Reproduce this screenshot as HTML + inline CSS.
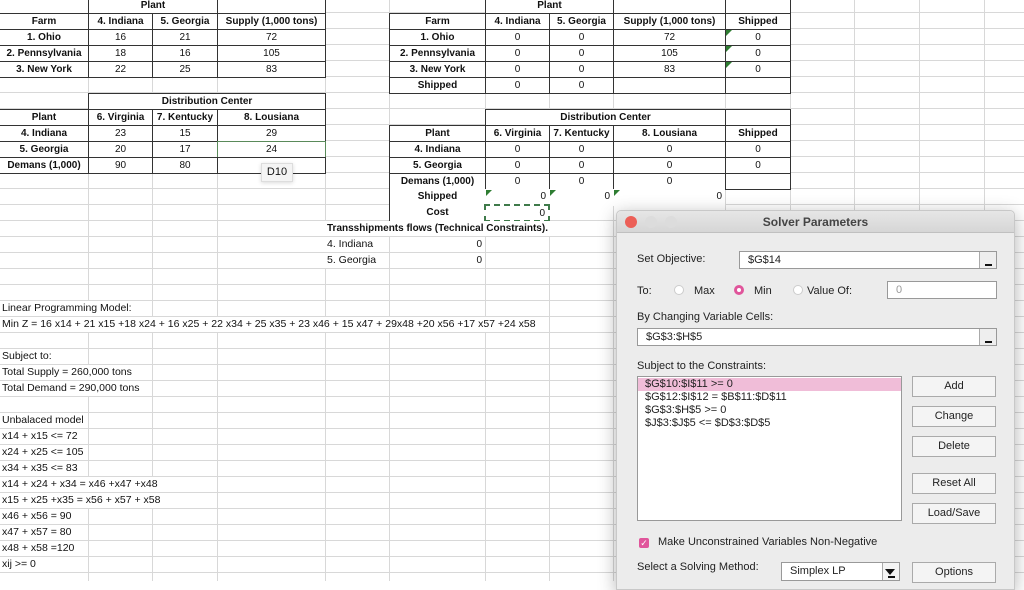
<!DOCTYPE html>
<html><head><meta charset="utf-8"><style>
*{margin:0;padding:0;box-sizing:border-box}
body{width:1024px;height:581px;overflow:hidden;background:#fff;position:relative;font-family:"Liberation Sans",sans-serif;font-size:10px;color:#111}
.g{position:absolute;inset:0;background-image:repeating-linear-gradient(to bottom,transparent 0,transparent 12px,#d8d8d8 12px,#d8d8d8 13px,transparent 13px,transparent 16px)}
.v{position:absolute;top:0;height:581px;width:1px;background:#d8d8d8}
.c{position:absolute;height:17px;line-height:16px;text-align:center;white-space:nowrap;font-size:10px;background:#fff}
.b{font-weight:bold}
.bd{border:1px solid #333}
.l{text-align:left;padding-left:2px;padding-right:2px;height:15px;line-height:15px;font-size:10.5px;background:#fff}
.r{text-align:right;padding-right:3px}
.tri{position:absolute;width:0;height:0;border-top:6px solid #2e7d32;border-right:6px solid transparent}
.dlg{position:absolute;left:616px;top:210px;width:399px;height:380px;background:#ececec;border:1px solid #c8c8c8;border-radius:5px 5px 0 0;box-shadow:0 4px 18px rgba(0,0,0,.3);font-size:11px;color:#222}
.dlg .t{position:absolute;white-space:nowrap}
.in{position:absolute;background:#fff;border:1px solid #999;height:18px;line-height:16px;padding-left:8px;font-size:11px}
.dd{position:absolute;right:0;top:0;width:17px;height:16px;border-left:1px solid #aaa;background:#eee}
.dd:after{content:"";position:absolute;left:5px;bottom:2px;width:7px;height:2px;background:#111}
.btn{position:absolute;left:295px;width:84px;height:21px;border:1px solid #aaa;background:#f4f4f4;text-align:center;line-height:19px;font-size:11px}
.rad{position:absolute;width:10px;height:10px;border-radius:50%;background:#fff;border:1px solid #ccc}
</style></head><body>
<div class="g" style="top:0"></div>
<div class="v" style="left:88px"></div><div class="v" style="left:152px"></div><div class="v" style="left:217px"></div><div class="v" style="left:325px"></div><div class="v" style="left:389px"></div><div class="v" style="left:485px"></div><div class="v" style="left:549px"></div><div class="v" style="left:613px"></div><div class="v" style="left:725px"></div><div class="v" style="left:790px"></div><div class="v" style="left:854px"></div><div class="v" style="left:919px"></div><div class="v" style="left:984px"></div>

<!-- left table 1 -->
<div class="c b" style="left:0;top:-3px;width:89px;border-bottom:1px solid #333"></div>
<div class="c b bd" style="left:88px;top:-3px;width:130px">Plant</div>
<div class="c bd" style="left:217px;top:-3px;width:109px"></div>
<div class="c b bd" style="left:-1px;top:13px;width:90px">Farm</div><div class="c b bd" style="left:88px;top:13px;width:65px">4. Indiana</div><div class="c b bd" style="left:152px;top:13px;width:66px">5. Georgia</div><div class="c b bd" style="left:217px;top:13px;width:109px">Supply (1,000 tons)</div>
<div class="c b bd" style="left:-1px;top:29px;width:90px">1. Ohio</div><div class="c bd" style="left:88px;top:29px;width:65px">16</div><div class="c bd" style="left:152px;top:29px;width:66px">21</div><div class="c bd" style="left:217px;top:29px;width:109px">72</div>
<div class="c b bd" style="left:-1px;top:45px;width:90px">2. Pennsylvania</div><div class="c bd" style="left:88px;top:45px;width:65px">18</div><div class="c bd" style="left:152px;top:45px;width:66px">16</div><div class="c bd" style="left:217px;top:45px;width:109px">105</div>
<div class="c b bd" style="left:-1px;top:61px;width:90px">3. New York</div><div class="c bd" style="left:88px;top:61px;width:65px">22</div><div class="c bd" style="left:152px;top:61px;width:66px">25</div><div class="c bd" style="left:217px;top:61px;width:109px">83</div>

<!-- left table 2 -->
<div class="c b bd" style="left:88px;top:93px;width:238px">Distribution Center</div>
<div class="c b bd" style="left:-1px;top:109px;width:90px">Plant</div><div class="c b bd" style="left:88px;top:109px;width:65px">6. Virginia</div><div class="c b bd" style="left:152px;top:109px;width:66px">7. Kentucky</div><div class="c b bd" style="left:217px;top:109px;width:109px">8. Lousiana</div>
<div class="c b bd" style="left:-1px;top:125px;width:90px">4. Indiana</div><div class="c bd" style="left:88px;top:125px;width:65px">23</div><div class="c bd" style="left:152px;top:125px;width:66px">15</div><div class="c bd" style="left:217px;top:125px;width:109px">29</div>
<div class="c b bd" style="left:-1px;top:141px;width:90px">5. Georgia</div><div class="c bd" style="left:88px;top:141px;width:65px">20</div><div class="c bd" style="left:152px;top:141px;width:66px">17</div><div class="c" style="left:217px;top:141px;width:109px;border:1px solid #5a8a5a">24</div>
<div class="c b bd" style="left:-1px;top:157px;width:90px">Demans (1,000)</div><div class="c bd" style="left:88px;top:157px;width:65px">90</div><div class="c bd" style="left:152px;top:157px;width:66px">80</div><div class="c bd" style="left:217px;top:157px;width:109px"></div>
<div style="position:absolute;left:261px;top:163px;width:32px;height:19px;background:#f4f4f4;border:1px solid #ddd;font-size:11px;line-height:17px;text-align:center;box-shadow:0 1px 4px rgba(0,0,0,.15)">D10</div>

<!-- right table 1 -->
<div class="c b bd" style="left:485px;top:-3px;width:129px">Plant</div><div class="c bd" style="left:613px;top:-3px;width:113px"></div><div class="c bd" style="left:725px;top:-3px;width:66px"></div>
<div class="c b bd" style="left:389px;top:13px;width:97px">Farm</div><div class="c b bd" style="left:485px;top:13px;width:65px">4. Indiana</div><div class="c b bd" style="left:549px;top:13px;width:65px">5. Georgia</div><div class="c b bd" style="left:613px;top:13px;width:113px">Supply (1,000 tons)</div><div class="c b bd" style="left:725px;top:13px;width:66px">Shipped</div>
<div class="c b bd" style="left:389px;top:29px;width:97px">1. Ohio</div><div class="c bd" style="left:485px;top:29px;width:65px">0</div><div class="c bd" style="left:549px;top:29px;width:65px">0</div><div class="c bd" style="left:613px;top:29px;width:113px">72</div><div class="c bd" style="left:725px;top:29px;width:66px">0</div>
<div class="c b bd" style="left:389px;top:45px;width:97px">2. Pennsylvania</div><div class="c bd" style="left:485px;top:45px;width:65px">0</div><div class="c bd" style="left:549px;top:45px;width:65px">0</div><div class="c bd" style="left:613px;top:45px;width:113px">105</div><div class="c bd" style="left:725px;top:45px;width:66px">0</div>
<div class="c b bd" style="left:389px;top:61px;width:97px">3. New York</div><div class="c bd" style="left:485px;top:61px;width:65px">0</div><div class="c bd" style="left:549px;top:61px;width:65px">0</div><div class="c bd" style="left:613px;top:61px;width:113px">83</div><div class="c bd" style="left:725px;top:61px;width:66px">0</div>
<div class="c b bd" style="left:389px;top:77px;width:97px">Shipped</div><div class="c bd" style="left:485px;top:77px;width:65px">0</div><div class="c bd" style="left:549px;top:77px;width:65px">0</div><div class="c bd" style="left:613px;top:77px;width:113px"></div><div class="c bd" style="left:725px;top:77px;width:66px"></div>
<div class="tri" style="left:726px;top:30px"></div><div class="tri" style="left:726px;top:46px"></div><div class="tri" style="left:726px;top:62px"></div>

<!-- right table 2 -->
<div class="c b bd" style="left:485px;top:109px;width:241px">Distribution Center</div><div class="c bd" style="left:725px;top:109px;width:66px"></div>
<div class="c b bd" style="left:389px;top:125px;width:97px">Plant</div><div class="c b bd" style="left:485px;top:125px;width:65px">6. Virginia</div><div class="c b bd" style="left:549px;top:125px;width:65px">7. Kentucky</div><div class="c b bd" style="left:613px;top:125px;width:113px">8. Lousiana</div><div class="c b bd" style="left:725px;top:125px;width:66px">Shipped</div>
<div class="c b bd" style="left:389px;top:141px;width:97px">4. Indiana</div><div class="c bd" style="left:485px;top:141px;width:65px">0</div><div class="c bd" style="left:549px;top:141px;width:65px">0</div><div class="c bd" style="left:613px;top:141px;width:113px">0</div><div class="c bd" style="left:725px;top:141px;width:66px">0</div>
<div class="c b bd" style="left:389px;top:157px;width:97px">5. Georgia</div><div class="c bd" style="left:485px;top:157px;width:65px">0</div><div class="c bd" style="left:549px;top:157px;width:65px">0</div><div class="c bd" style="left:613px;top:157px;width:113px">0</div><div class="c bd" style="left:725px;top:157px;width:66px">0</div>
<div class="c b bd" style="left:389px;top:173px;width:97px">Demans (1,000)</div><div class="c bd" style="left:485px;top:173px;width:65px">0</div><div class="c bd" style="left:549px;top:173px;width:65px">0</div><div class="c bd" style="left:613px;top:173px;width:113px">0</div><div class="c bd" style="left:725px;top:173px;width:66px"></div>
<div class="c b" style="left:389px;top:189px;width:96px;border-left:1px solid #333">Shipped</div>
<div class="c r" style="left:485px;top:189px;width:64px">0</div><div class="c r" style="left:549px;top:189px;width:64px">0</div><div class="c r" style="left:613px;top:189px;width:112px">0</div>
<div class="tri" style="left:486px;top:190px"></div><div class="tri" style="left:550px;top:190px"></div><div class="tri" style="left:614px;top:190px"></div>
<div class="c b" style="left:389px;top:205px;width:96px;border-left:1px solid #333">Cost</div>
<div class="c r" style="left:484px;top:204px;width:66px;height:18px;border:2px dashed #3f7a4a">0</div>
<div class="c b l" style="left:325px;top:221px;font-size:10px">Transshipments flows (Technical Constraints).</div>
<div class="c l" style="left:325px;top:237px">4. Indiana</div><div class="c r" style="left:389px;top:237px;width:96px;height:15px;background:none">0</div>
<div class="c l" style="left:325px;top:253px">5. Georgia</div><div class="c r" style="left:389px;top:253px;width:96px;height:15px;background:none">0</div>

<!-- left text -->
<div class="c l" style="left:0;top:301px">Linear Programming Model:</div>
<div class="c l" style="left:0;top:317px">Min Z = 16 x14 + 21 x15 +18 x24 + 16 x25 + 22 x34 + 25 x35 + 23 x46 + 15 x47 + 29x48 +20 x56 +17 x57 +24 x58</div>
<div class="c l" style="left:0;top:349px">Subject to:</div>
<div class="c l" style="left:0;top:365px">Total Supply = 260,000 tons</div>
<div class="c l" style="left:0;top:381px">Total Demand = 290,000 tons</div>
<div class="c l" style="left:0;top:413px">Unbalaced model</div>
<div class="c l" style="left:0;top:429px">x14 + x15 &lt;= 72</div>
<div class="c l" style="left:0;top:445px">x24 + x25 &lt;= 105</div>
<div class="c l" style="left:0;top:461px">x34 + x35 &lt;= 83</div>
<div class="c l" style="left:0;top:477px">x14 + x24 + x34 = x46 +x47 +x48</div>
<div class="c l" style="left:0;top:493px">x15 + x25 +x35 = x56 + x57 + x58</div>
<div class="c l" style="left:0;top:509px">x46 + x56 = 90</div>
<div class="c l" style="left:0;top:525px">x47 + x57 = 80</div>
<div class="c l" style="left:0;top:541px">x48 + x58 =120</div>
<div class="c l" style="left:0;top:557px">xij &gt;= 0</div>

<!-- dialog -->
<div class="dlg">
 <div style="position:absolute;left:0;top:0;right:0;height:22px;background:linear-gradient(#e6e6e6,#d6d6d6);border-bottom:1px solid #c0c0c0;border-radius:5px 5px 0 0"></div>
 <div style="position:absolute;left:8px;top:5px;width:12px;height:12px;border-radius:50%;background:#ec5f57"></div>
 <div style="position:absolute;left:28px;top:5px;width:12px;height:12px;border-radius:50%;background:#dcdcdc"></div>
 <div style="position:absolute;left:48px;top:5px;width:12px;height:12px;border-radius:50%;background:#dcdcdc"></div>
 <div class="t" style="left:0;right:0;top:4px;text-align:center;font-weight:bold;font-size:12px;color:#444">Solver Parameters</div>
 <div class="t" style="left:20px;top:42px">Set Objective:</div>
 <div class="in" style="left:122px;top:40px;width:258px">$G$14<span class="dd"></span></div>
 <div class="t" style="left:20px;top:74px">To:</div>
 <div class="rad" style="left:57px;top:74px"></div><div class="t" style="left:77px;top:74px">Max</div>
 <div class="rad" style="left:117px;top:74px;border:3px solid #e0559b"></div><div class="t" style="left:137px;top:74px">Min</div>
 <div class="rad" style="left:176px;top:74px"></div><div class="t" style="left:190px;top:74px">Value Of:</div>
 <div class="in" style="left:270px;top:70px;width:110px;color:#999">0</div>
 <div class="t" style="left:20px;top:100px">By Changing Variable Cells:</div>
 <div class="in" style="left:20px;top:117px;width:360px">$G$3:$H$5<span class="dd"></span></div>
 <div class="t" style="left:20px;top:149px">Subject to the Constraints:</div>
 <div style="position:absolute;left:20px;top:165px;width:265px;height:145px;background:#fff;border:1px solid #999;font-size:11px;line-height:13px">
  <div style="background:#f0bdd8;padding-left:7px;margin-top:1px">$G$10:$I$11 &gt;= 0</div>
  <div style="padding-left:7px">$G$12:$I$12 = $B$11:$D$11</div>
  <div style="padding-left:7px">$G$3:$H$5 &gt;= 0</div>
  <div style="padding-left:7px">$J$3:$J$5 &lt;= $D$3:$D$5</div>
 </div>
 <div class="btn" style="top:165px">Add</div>
 <div class="btn" style="top:195px">Change</div>
 <div class="btn" style="top:225px">Delete</div>
 <div class="btn" style="top:262px">Reset All</div>
 <div class="btn" style="top:292px">Load/Save</div>
 <div style="position:absolute;left:22px;top:327px;width:10px;height:10px;background:#e0559b;border-radius:2px;color:#fff;font-size:9px;line-height:10px;text-align:center">✓</div>
 <div class="t" style="left:41px;top:325px">Make Unconstrained Variables Non-Negative</div>
 <div class="t" style="left:20px;top:350px">Select a Solving Method:</div>
 <div class="in" style="left:164px;top:351px;width:119px;height:19px">Simplex LP<span class="dd" style="height:17px;background:#f4f4f4"></span><span style="position:absolute;right:4px;top:6px;border-left:5px solid transparent;border-right:5px solid transparent;border-top:6px solid #111"></span></div>
 <div class="btn" style="top:351px">Options</div>
</div>
</body></html>
